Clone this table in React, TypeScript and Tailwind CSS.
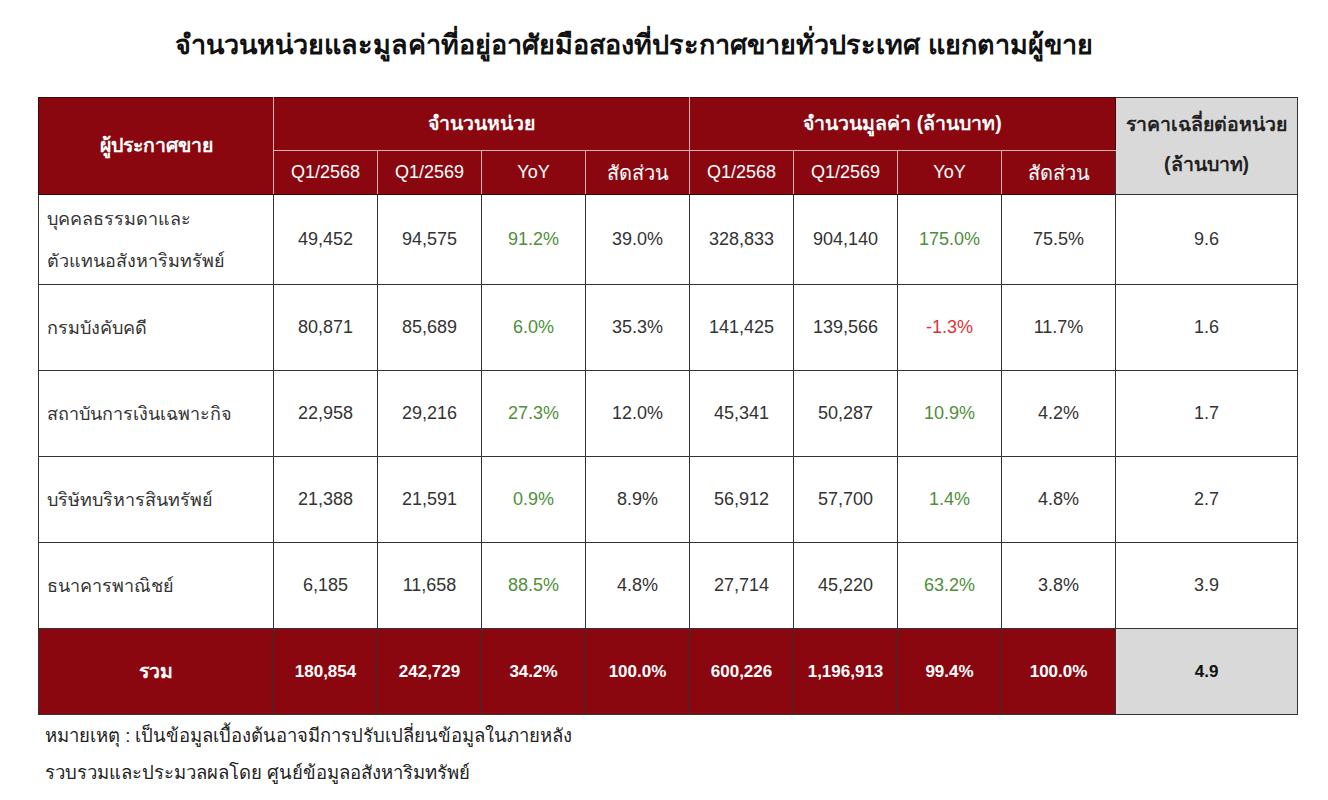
const rows = [
  { name: ['บุคคลธรรมดาและ', 'ตัวแทนอสังหาริมทรัพย์'], v: ['49,452', '94,575', '91.2%', '39.0%', '328,833', '904,140', '175.0%', '75.5%', '9.6'], h: 'h-[90px]' },
  { name: ['กรมบังคับคดี'], v: ['80,871', '85,689', '6.0%', '35.3%', '141,425', '139,566', '-1.3%', '11.7%', '1.6'], h: 'h-[86px]' },
  { name: ['สถาบันการเงินเฉพาะกิจ'], v: ['22,958', '29,216', '27.3%', '12.0%', '45,341', '50,287', '10.9%', '4.2%', '1.7'], h: 'h-[86px]' },
  { name: ['บริษัทบริหารสินทรัพย์'], v: ['21,388', '21,591', '0.9%', '8.9%', '56,912', '57,700', '1.4%', '4.8%', '2.7'], h: 'h-[86px]' },
  { name: ['ธนาคารพาณิชย์'], v: ['6,185', '11,658', '88.5%', '4.8%', '27,714', '45,220', '63.2%', '3.8%', '3.9'], h: 'h-[86px]' },
];

const total = ['180,854', '242,729', '34.2%', '100.0%', '600,226', '1,196,913', '99.4%', '100.0%'];
const sub = ['Q1/2568', 'Q1/2569', 'YoY', 'สัดส่วน'];

function valueColor(i: number, v: string) {
  if (i === 2 || i === 6) return v.startsWith('-') ? 'text-[#d9343a]' : 'text-[#4e8f3a]';
  return 'text-[#333]';
}

export default function App() {
  return (
    <div className="w-[1328px] h-[800px] bg-white text-[#222]" style={{ fontFamily: '"Liberation Sans", "Noto Sans", sans-serif' }}>
      <div className="pt-[26px] pr-[60px] flex justify-center">
        <h1 className="text-[27px] font-bold text-[#111] leading-[38px]">
          จำนวนหน่วยและมูลค่าที่อยู่อาศัยมือสองที่ประกาศขายทั่วประเทศ แยกตามผู้ขาย
        </h1>
      </div>

      <div className="pl-[38px] pt-[33px]">
        <table className="table-fixed border-collapse w-[1259px] text-center text-[18px]">
          <colgroup>
            <col className="w-[235px]" />
            <col className="w-[104px]" />
            <col className="w-[104px]" />
            <col className="w-[104px]" />
            <col className="w-[104px]" />
            <col className="w-[104px]" />
            <col className="w-[104px]" />
            <col className="w-[104px]" />
            <col className="w-[114px]" />
            <col className="w-[182px]" />
          </colgroup>
          <thead>
            <tr className="h-[53px] bg-[#8b0710] text-white">
              <th rowSpan={2} className="border border-[#3a0a0a] border-r-[#d8b0b0] font-bold text-[19.5px]">ผู้ประกาศขาย</th>
              <th colSpan={4} className="border border-[#3a0a0a] border-r-[#d8b0b0] border-b-[#d8b0b0] font-bold text-[19.5px]">จำนวนหน่วย</th>
              <th colSpan={4} className="border border-[#3a0a0a] border-b-[#d8b0b0] font-bold text-[19.5px]">จำนวนมูลค่า (ล้านบาท)</th>
              <th rowSpan={2} className="border border-[#333] bg-[#d9d9d9] text-[#222] font-bold text-[19.5px] align-top pt-[6px] leading-[40px]">
                ราคาเฉลี่ยต่อหน่วย
                <br />
                (ล้านบาท)
              </th>
            </tr>
            <tr className="h-[44px] bg-[#8b0710] text-white">
              {[...sub, ...sub].map((s, i) => (
                <th key={i} className={`border border-[#3a0a0a] border-r-[#d8b0b0] font-medium ${i % 4 === 3 ? 'text-[20px]' : 'text-[18px]'}`}>{s}</th>
              ))}
            </tr>
          </thead>
          <tbody>
            {rows.map((r) => (
              <tr key={r.name[0]} className={r.h}>
                <td className="border border-[#333] text-left pl-[8px] text-[#333] text-[18px] leading-[42px]">
                  {r.name.map((n) => (
                    <div key={n}>{n}</div>
                  ))}
                </td>
                {r.v.map((v, i) => (
                  <td key={i} className={`border border-[#333] ${valueColor(i, v)}`}>{v}</td>
                ))}
              </tr>
            ))}
            <tr className="h-[86px] bg-[#8b0710] text-white font-bold text-[17px]">
              <td className="border border-[#333] text-[19.5px]">รวม</td>
              {total.map((v, i) => (
                <td key={i} className="border border-[#333]">{v}</td>
              ))}
              <td className="border border-[#333] bg-[#d9d9d9] text-[#111]">4.9</td>
            </tr>
          </tbody>
        </table>

        <div className="text-[18.5px] text-[#222] leading-[37px] pt-[2px] pl-[7px]">
          <div>หมายเหตุ : เป็นข้อมูลเบื้องต้นอาจมีการปรับเปลี่ยนข้อมูลในภายหลัง</div>
          <div>รวบรวมและประมวลผลโดย ศูนย์ข้อมูลอสังหาริมทรัพย์</div>
        </div>
      </div>
    </div>
  );
}
